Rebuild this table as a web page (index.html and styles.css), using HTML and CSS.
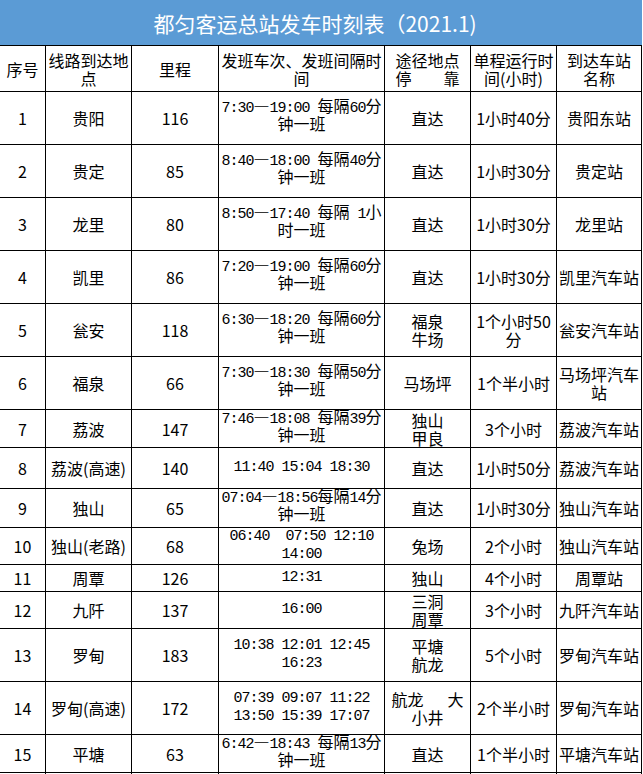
FILE: index.html
```html
<!DOCTYPE html>
<html lang="zh-CN">
<head>
<meta charset="utf-8">
<title>都匀客运总站发车时刻表（2021.1)</title>
<link rel="stylesheet" href="styles.css">
</head>
<body>
<table class="sheet">
  <colgroup>
    <col class="w1"><col class="w2"><col class="w3"><col class="w4"><col class="w5"><col class="w6"><col class="w7">
  </colgroup>
  <tr class="h46">
    <th class="title" colspan="7">都匀客运总站发车时刻表（2021.1)</th>
  </tr>
  <tr class="h46">
    <th>序号</th>
    <th>线路到达地<br>点</th>
    <th>里程</th>
    <th>发班车次、发班间隔时<br>间</th>
    <th>途径地点<br>停<span class="g32"></span>靠</th>
    <th>单程运行时<br>间(小时)</th>
    <th>到达车站<br>名称</th>
  </tr>
  <tr class="h53">
    <td>1</td><td>贵阳</td><td>116</td>
    <td class="tm">7:30<span class="c">—</span>19:00 <span class="c">每隔</span>60<span class="c">分</span><br><span class="c">钟一班</span></td>
    <td>直达</td><td>1小时40分</td><td>贵阳东站</td>
  </tr>
  <tr class="h53">
    <td>2</td><td>贵定</td><td>85</td>
    <td class="tm">8:40<span class="c">—</span>18:00 <span class="c">每隔</span>40<span class="c">分</span><br><span class="c">钟一班</span></td>
    <td>直达</td><td>1小时30分</td><td>贵定站</td>
  </tr>
  <tr class="h53">
    <td>3</td><td>龙里</td><td>80</td>
    <td class="tm">8:50<span class="c">—</span>17:40 <span class="c">每隔</span> 1<span class="c">小</span><br><span class="c">时一班</span></td>
    <td>直达</td><td>1小时30分</td><td>龙里站</td>
  </tr>
  <tr class="h53">
    <td>4</td><td>凯里</td><td>86</td>
    <td class="tm">7:20<span class="c">—</span>19:00 <span class="c">每隔</span>60<span class="c">分</span><br><span class="c">钟一班</span></td>
    <td>直达</td><td>1小时30分</td><td>凯里汽车站</td>
  </tr>
  <tr class="h53">
    <td>5</td><td>瓮安</td><td>118</td>
    <td class="tm">6:30<span class="c">—</span>18:20 <span class="c">每隔</span>60<span class="c">分</span><br><span class="c">钟一班</span></td>
    <td>福泉<br>牛场</td><td>1个小时50<br>分</td><td>瓮安汽车站</td>
  </tr>
  <tr class="h53">
    <td>6</td><td>福泉</td><td>66</td>
    <td class="tm">7:30<span class="c">—</span>18:30 <span class="c">每隔</span>50<span class="c">分</span><br><span class="c">钟一班</span></td>
    <td>马场坪</td><td>1个半小时</td><td>马场坪汽车<br>站</td>
  </tr>
  <tr class="h38">
    <td>7</td><td>荔波</td><td>147</td>
    <td class="tm">7:46<span class="c">—</span>18:08 <span class="c">每隔</span>39<span class="c">分</span><br><span class="c">钟一班</span></td>
    <td>独山<br>甲良</td><td>3个小时</td><td>荔波汽车站</td>
  </tr>
  <tr class="h41">
    <td>8</td><td>荔波(高速)</td><td>140</td>
    <td class="tm">11:40 15:04 18:30</td>
    <td>直达</td><td>1小时50分</td><td>荔波汽车站</td>
  </tr>
  <tr class="h39">
    <td>9</td><td>独山</td><td>65</td>
    <td class="tm">07:04<span class="c">—</span>18:56<span class="c">每隔</span>14<span class="c">分</span><br><span class="c">钟一班</span></td>
    <td>直达</td><td>1小时30分</td><td>独山汽车站</td>
  </tr>
  <tr class="h37">
    <td>10</td><td>独山(老路)</td><td>68</td>
    <td class="tm">06:40&nbsp; 07:50 12:10<br>14:00</td>
    <td>兔场</td><td>2个小时</td><td>独山汽车站</td>
  </tr>
  <tr class="h27">
    <td>11</td><td>周覃</td><td>126</td>
    <td class="tm">12:31</td>
    <td>独山</td><td>4个小时</td><td>周覃站</td>
  </tr>
  <tr class="h37">
    <td>12</td><td>九阡</td><td>137</td>
    <td class="tm">16:00</td>
    <td>三洞<br>周覃</td><td>3个小时</td><td>九阡汽车站</td>
  </tr>
  <tr class="h53">
    <td>13</td><td>罗甸</td><td>183</td>
    <td class="tm">10:38 12:01 12:45<br>16:23</td>
    <td>平塘<br>航龙</td><td>5个小时</td><td>罗甸汽车站</td>
  </tr>
  <tr class="h53">
    <td>14</td><td>罗甸(高速)</td><td>172</td>
    <td class="tm">07:39 09:07 11:22<br>13:50 15:39 17:07</td>
    <td>航龙<span class="g24"></span>大<br>小井</td><td>2个半小时</td><td>罗甸汽车站</td>
  </tr>
  <tr class="h38">
    <td>15</td><td>平塘</td><td>63</td>
    <td class="tm">6:42<span class="c">—</span>18:43 <span class="c">每隔</span>13<span class="c">分</span><br><span class="c">钟一班</span></td>
    <td>直达</td><td>1个半小时</td><td>平塘汽车站</td>
  </tr>
  <tr class="h40">
    <td></td><td></td><td></td><td></td><td></td><td></td><td></td>
  </tr>
</table>
</body>
</html>
```
FILE: styles.css
```css
html, body {
  margin: 0;
  padding: 0;
  background: #ffffff;
}

.sheet {
  border-collapse: separate;
  border-spacing: 0;
  table-layout: fixed;
  width: 642px;
  font-family: "Noto Sans CJK SC", sans-serif;
  font-size: 16px;
  line-height: 18px;
  color: #000000;
}

.w1 { width: 46px; }
.w2 { width: 86px; }
.w3 { width: 87px; }
.w4 { width: 166px; }
.w5 { width: 86px; }
.w6 { width: 86px; }
.w7 { width: 85px; }

.sheet th,
.sheet td {
  box-sizing: border-box;
  padding: 0;
  border-right: 1px solid #000000;
  border-bottom: 1px solid #000000;
  text-align: center;
  vertical-align: middle;
  white-space: nowrap;
  font-weight: normal;
}

.sheet th.title {
  background: #5b9bd5;
  color: #ffffff;
  font-size: 21px;
  line-height: 24px;
  border-right: none;
  padding-right: 12px;
}

.h46 { height: 46px; }
.h53 { height: 53px; }
.h41 { height: 41px; }
.h40 { height: 40px; }
.h39 { height: 39px; }
.h38 { height: 38px; }
.h37 { height: 37px; }
.h27 { height: 27px; }

.sheet td.tm {
  font-family: "Liberation Mono", "Noto Sans CJK SC", monospace;
  font-size: 15px;
  letter-spacing: -1px;
}

.c {
  font-family: "Noto Sans CJK SC", sans-serif;
  font-size: 16px;
  letter-spacing: 0;
  line-height: 0;
}

.g32 {
  display: inline-block;
  width: 32px;
}

.g24 {
  display: inline-block;
  width: 24px;
}
```
